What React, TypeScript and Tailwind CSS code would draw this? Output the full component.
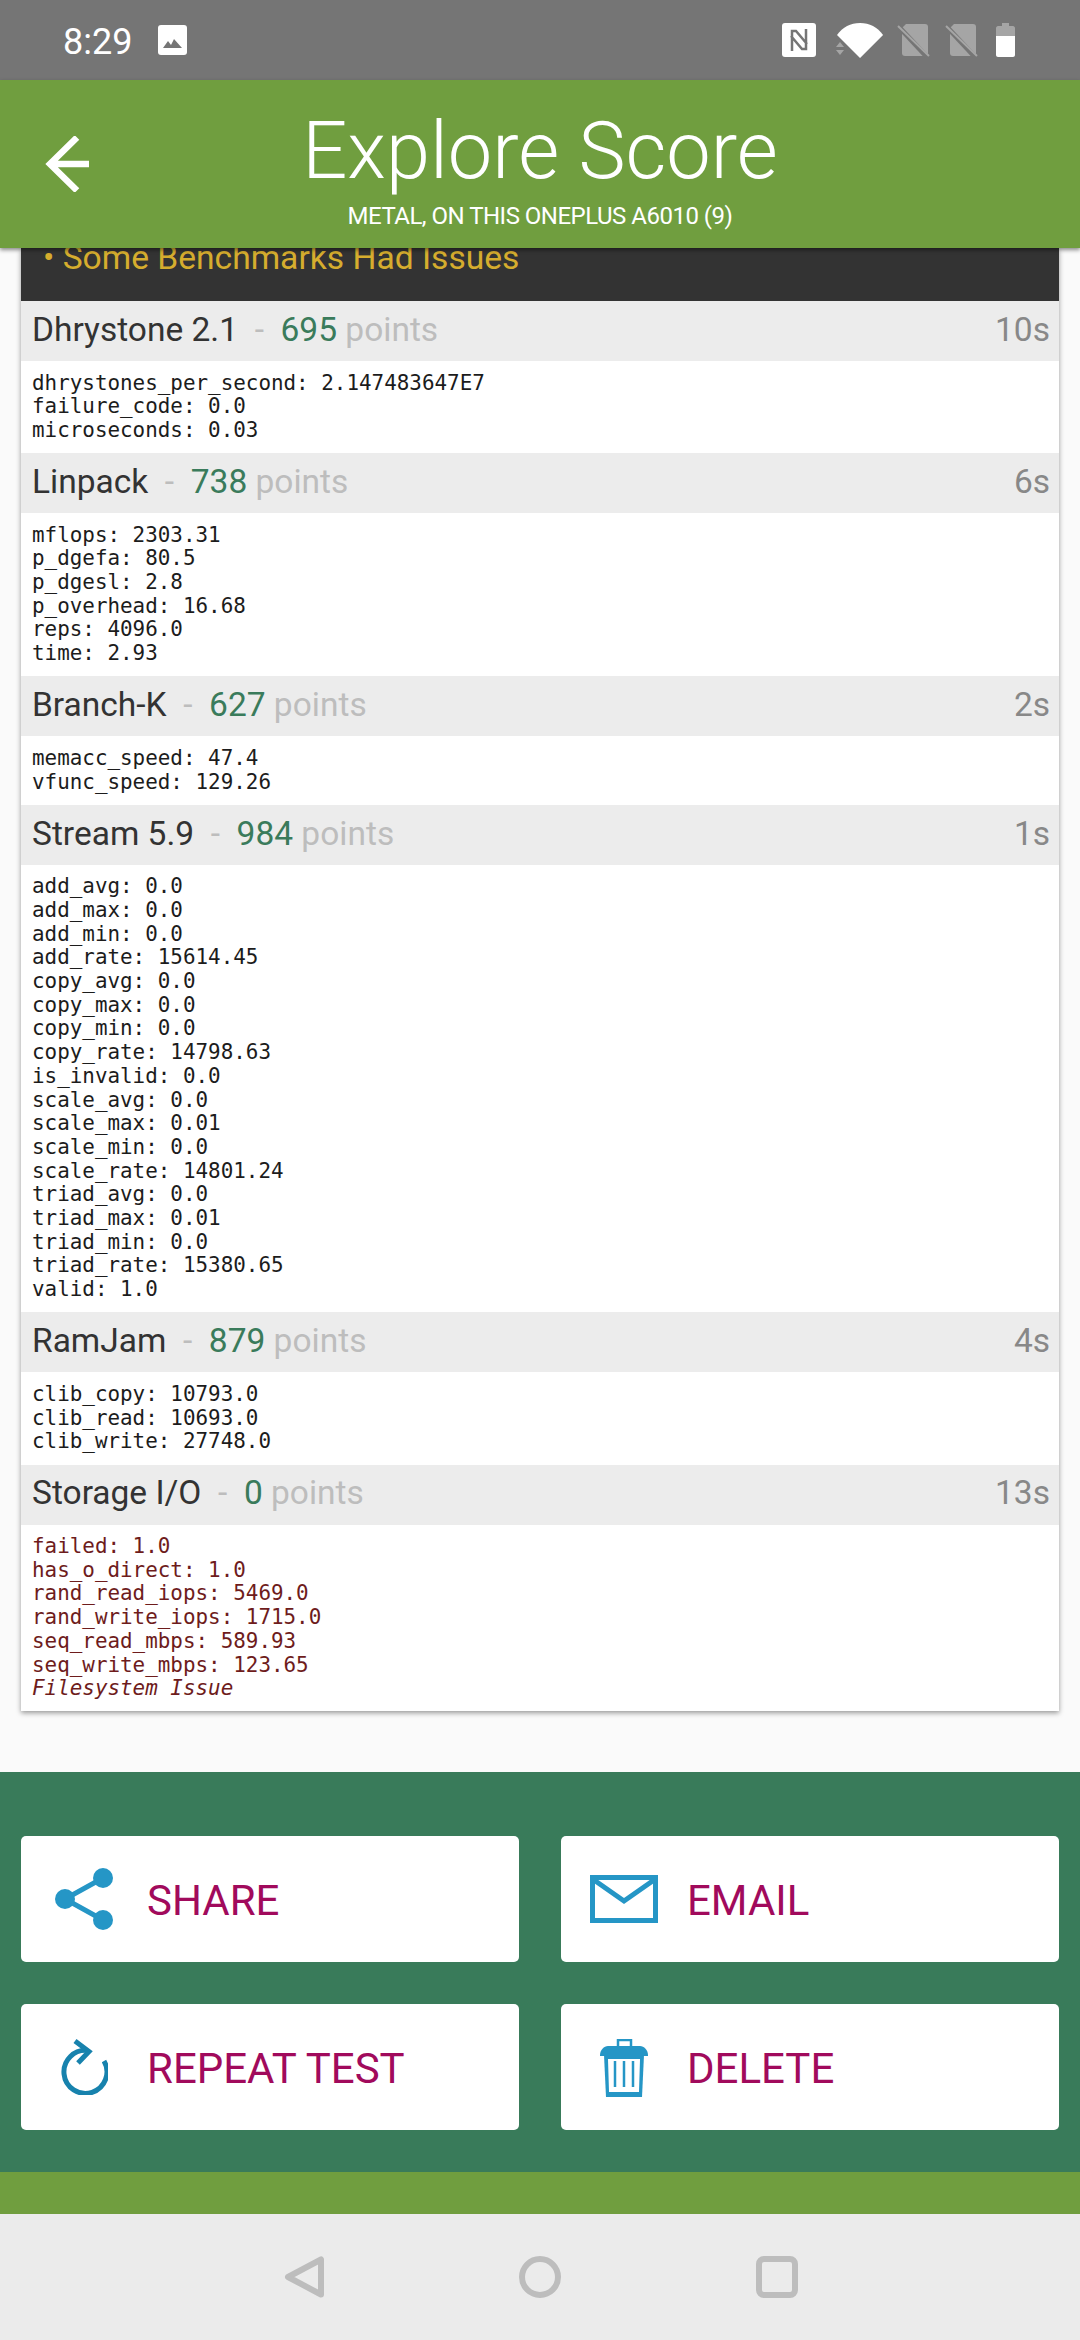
import React from 'react';

type Row = { name: string; score: number; time: string; lines: string[]; failed?: boolean; note?: string };

const rows: Row[] = [
    { name: 'Dhrystone 2.1', score: 695, time: '10s', lines: ['dhrystones_per_second: 2.147483647E7', 'failure_code: 0.0', 'microseconds: 0.03'] },
    { name: 'Linpack', score: 738, time: '6s', lines: ['mflops: 2303.31', 'p_dgefa: 80.5', 'p_dgesl: 2.8', 'p_overhead: 16.68', 'reps: 4096.0', 'time: 2.93'] },
    { name: 'Branch-K', score: 627, time: '2s', lines: ['memacc_speed: 47.4', 'vfunc_speed: 129.26'] },
    {
        name: 'Stream 5.9', score: 984, time: '1s', lines: [
            'add_avg: 0.0', 'add_max: 0.0', 'add_min: 0.0', 'add_rate: 15614.45',
            'copy_avg: 0.0', 'copy_max: 0.0', 'copy_min: 0.0', 'copy_rate: 14798.63',
            'is_invalid: 0.0',
            'scale_avg: 0.0', 'scale_max: 0.01', 'scale_min: 0.0', 'scale_rate: 14801.24',
            'triad_avg: 0.0', 'triad_max: 0.01', 'triad_min: 0.0', 'triad_rate: 15380.65',
            'valid: 1.0',
        ],
    },
    { name: 'RamJam', score: 879, time: '4s', lines: ['clib_copy: 10793.0', 'clib_read: 10693.0', 'clib_write: 27748.0'] },
    {
        name: 'Storage I/O', score: 0, time: '13s', failed: true, note: 'Filesystem Issue',
        lines: ['failed: 1.0', 'has_o_direct: 1.0', 'rand_read_iops: 5469.0', 'rand_write_iops: 1715.0', 'seq_read_mbps: 589.93', 'seq_write_mbps: 123.65'],
    },
];

const StatusIcons = () => (
    <div className="flex items-center">
        <svg width="34" height="34" viewBox="0 0 34 34" className="mr-[20px]">
            <rect width="34" height="34" rx="3" fill="#fff" />
            <path d="M10 28V8h4l11 13M24 6v20h-4L9 13" fill="none" stroke="#757575" strokeWidth="2.5" />
        </svg>
        <svg width="48" height="35" viewBox="0 0 48 35" className="mr-[13px]">
            <path d="M0 12C6 4 14 0 24 0s18 4 24 12L24 35z" fill="#fff" transform="translate(1 0) scale(.96 1)" />
            <path d="M0 24l4-5 4 5zM0 27l4 5 4-5z" fill="#a5a5a5" />
        </svg>
        <svg width="34" height="35" viewBox="0 0 34 35" className="mr-[14px]">
            <path d="M9 1h19c2 0 3 1 3 3v26c0 2-1 3-3 3H8c-2 0-3-1-3-3V5z" fill="#a5a5a5" />
            <path d="M1 3l29 31" stroke="#757575" strokeWidth="5" />
            <path d="M1 3l31 30" stroke="#a5a5a5" strokeWidth="2" />
        </svg>
        <svg width="34" height="35" viewBox="0 0 34 35" className="mr-[17px]">
            <path d="M9 1h19c2 0 3 1 3 3v26c0 2-1 3-3 3H8c-2 0-3-1-3-3V5z" fill="#a5a5a5" />
            <path d="M1 3l29 31" stroke="#757575" strokeWidth="5" />
            <path d="M1 3l31 30" stroke="#a5a5a5" strokeWidth="2" />
        </svg>
        <svg width="19" height="34" viewBox="0 0 19 34">
            <path d="M6 0h7v3h4c1 0 2 1 2 2v8H0V5c0-1 1-2 2-2h4z" fill="#a5a5a5" />
            <path d="M0 13h19v19c0 1-1 2-2 2H2c-1 0-2-1-2-2z" fill="#fff" />
        </svg>
    </div>
);

const ResultRow = ({ row }: { row: Row }) => (
    <div>
        <div className="h-[60px] bg-[#ececec] flex items-center justify-between pl-[11px] pr-[9px] pb-[2px] text-[33.5px] font-['Roboto',sans-serif]">
            <div className="whitespace-pre text-[#333333]">
                {row.name}
                <span className="text-[#bdbdbd]">{'  -  '}</span>
                <span className="text-[#3a7b5b]">{row.score}</span>
                <span className="text-[#bdbdbd]"> points</span>
            </div>
            <div className="text-[#888888]">{row.time}</div>
        </div>
        <div className={`bg-white py-[10.5px] pl-[11px] text-[20.9px] leading-[23.7px] font-['DejaVu_Sans_Mono',monospace] ${row.failed ? 'text-[#6e1c1c]' : 'text-[#1c1c1c]'}`}>
            {row.lines.map((line) => (
                <div key={line} className="whitespace-pre">{line}</div>
            ))}
            {row.note && <div className="italic">{row.note}</div>}
        </div>
    </div>
);

const ActionButton = ({ label, icon }: { label: string; icon: React.ReactNode }) => (
    <div className="h-[126px] bg-white rounded-[5px] flex items-center">
        <div className="w-[126px] flex justify-center items-center shrink-0">{icon}</div>
        <span className="pt-[2px] text-[42px] text-[#a10a5c] font-['Roboto',sans-serif]">{label}</span>
    </div>
);

const ShareIcon = () => (
    <svg width="58" height="62" viewBox="0 0 58 62" fill="#2596c6">
        <path d="M48 10L10 31l38 21" fill="none" stroke="#2596c6" strokeWidth="5" />
        <circle cx="48" cy="10" r="10" />
        <circle cx="10" cy="31" r="10" />
        <circle cx="48" cy="52" r="10" />
    </svg>
);

const EmailIcon = () => (
    <svg width="68" height="48" viewBox="0 0 68 48" fill="none" stroke="#2596c6" strokeWidth="5">
        <rect x="2.5" y="2.5" width="63" height="43" />
        <path d="M4 5l30 21L64 5" />
    </svg>
);

const RepeatIcon = () => (
    <svg width="48" height="56" viewBox="0 0 48 56" fill="none" stroke="#1782ad" strokeWidth="5">
        <path d="M44 22A21.5 21.5 0 1 1 28 11.5" />
        <path d="M15 2l14 10.5L18 24" />
    </svg>
);

const TrashIcon = () => (
    <svg width="48" height="58" viewBox="0 0 48 58" className="mt-[2px]">
        <rect x="18" y="1" width="13" height="8" fill="none" stroke="#2596c6" strokeWidth="2.5" />
        <path d="M8 7h32c4 0 8 4 8 9v1H0v-1c0-5 4-9 8-9z" fill="#2596c6" />
        <path d="M4 16h40l-2 42H6z" fill="#2596c6" />
        <path d="M8 20h32l-1 33H9z" fill="#fff" />
        <path d="M15 22v26M24 22v26M33 22v26" stroke="#2596c6" strokeWidth="2.5" />
    </svg>
);

export default function App() {
    return (
        <div className="w-[1080px] h-[2340px] flex flex-col overflow-hidden bg-[#fafafa] font-['Roboto',sans-serif]">
            <div className="h-[80px] shrink-0 bg-[#757575] flex items-center justify-between pl-[63px] pr-[65px] text-white">
                <div className="flex items-center gap-[26px]">
                    <span className="pt-[3px] text-[36px] leading-none">8:29</span>
                    <svg width="29" height="30" viewBox="0 0 29 30">
                        <rect width="29" height="30" rx="3" fill="#fff" />
                        <path d="M5 23l5-7 3 4 3-6 8 9z" fill="#757575" />
                    </svg>
                </div>
                <StatusIcons />
            </div>

            <div className="relative z-10 h-[168px] shrink-0 bg-[#709e3f] shadow-[0_2px_4px_rgba(0,0,0,0.45)] flex flex-col items-center text-white">
                <svg width="44" height="56" viewBox="0 0 44 56" fill="none" stroke="#fff" strokeWidth="6.5" className="absolute left-[45px] top-[56px]">
                    <path d="M32 1.5L5 28l27 26.5M5 28h39" />
                </svg>
                <div className="mt-[25px] text-[79.3px] leading-[92px] font-light">Explore Score</div>
                <div className="text-[24px] leading-[30px] mt-[4px] tracking-[-0.5px]">METAL, ON THIS ONEPLUS A6010 (9)</div>
            </div>

            <div className="flex-1">
                <div className="mx-[21px] shadow-[0_2px_5px_rgba(0,0,0,0.4)]">
                    <div className="h-[53px] bg-[#333333] overflow-hidden pl-[22px]">
                        <div className="-mt-[10px] text-[33.6px] leading-[40px] text-[#d6ad2e]">• Some Benchmarks Had Issues</div>
                    </div>
                    {rows.map((row) => (
                        <ResultRow key={row.name} row={row} />
                    ))}
                </div>
            </div>

            <div className="h-[400px] shrink-0 bg-[#397b5a] px-[21px] pt-[64px] grid grid-cols-2 gap-x-[42px] gap-y-[42px] content-start">
                <ActionButton label="SHARE" icon={<ShareIcon />} />
                <ActionButton label="EMAIL" icon={<EmailIcon />} />
                <ActionButton label="REPEAT TEST" icon={<RepeatIcon />} />
                <ActionButton label="DELETE" icon={<TrashIcon />} />
            </div>
            <div className="h-[42px] shrink-0 bg-[#709e3f]" />

            <div className="h-[126px] shrink-0 bg-[#ebebeb] flex items-center justify-center gap-[195px]">
                <svg width="42" height="42" viewBox="0 0 42 42" fill="none" stroke="#bdbdbd" strokeWidth="6" strokeLinejoin="round">
                    <path d="M39 3.5v35L6 21z" />
                </svg>
                <svg width="42" height="42" viewBox="0 0 42 42" fill="none" stroke="#bdbdbd" strokeWidth="6">
                    <circle cx="21" cy="21" r="18" />
                </svg>
                <svg width="42" height="42" viewBox="0 0 42 42" fill="none" stroke="#bdbdbd" strokeWidth="6">
                    <rect x="3" y="3" width="36" height="36" rx="5" />
                </svg>
            </div>
        </div>
    );
}
